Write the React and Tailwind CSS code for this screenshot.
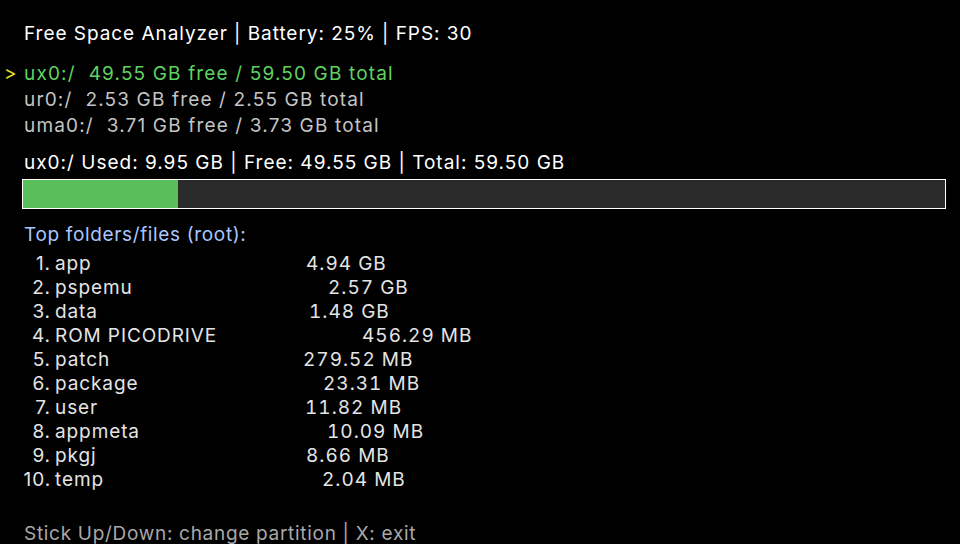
import React from "react";

const rows = [
  { n: "1.", name: "app", size: "4.94 GB", w: "w-[255px]" },
  { n: "2.", name: "pspemu", size: "2.57 GB", w: "w-[277px]" },
  { n: "3.", name: "data", size: "1.48 GB", w: "w-[258px]" },
  { n: "4.", name: "ROM PICODRIVE", size: "456.29 MB", w: "w-[311px]" },
  { n: "5.", name: "patch", size: "279.52 MB", w: "w-[252px]" },
  { n: "6.", name: "package", size: "23.31 MB", w: "w-[272px]" },
  { n: "7.", name: "user", size: "11.82 MB", w: "w-[254px]" },
  { n: "8.", name: "appmeta", size: "10.09 MB", w: "w-[276px]" },
  { n: "9.", name: "pkgj", size: "8.66 MB", w: "w-[255px]" },
  { n: "10.", name: "temp", size: "2.04 MB", w: "w-[271px]" },
];

export default function App() {
  return (
    <div
      className="w-[960px] h-[544px] bg-black overflow-hidden text-[19px] whitespace-nowrap"
      style={{ fontFamily: "Inter, 'Noto Sans', sans-serif" }}
    >
      <div className="flex flex-col pt-[21px]">
        <div className="h-[26px] leading-[26px] pl-[24px] text-white tracking-[0.95px]">
          Free Space Analyzer | Battery: 25% | FPS: 30
        </div>
        <div className="mt-[14px] flex flex-col tracking-[1.15px]">
          <div className="h-[26px] leading-[26px] flex text-[#5fd35f]">
            <span className="w-[24px] pl-[4px] text-[#f0e020]">&gt;</span>
            <span>ux0:/&nbsp;&nbsp;49.55 GB free / 59.50 GB total</span>
          </div>
          <div className="h-[26px] leading-[26px] pl-[24px] text-[#c4c4c4]">
            ur0:/&nbsp;&nbsp;2.53 GB free / 2.55 GB total
          </div>
          <div className="h-[26px] leading-[26px] pl-[24px] text-[#c4c4c4]">
            uma0:/&nbsp;&nbsp;3.71 GB free / 3.73 GB total
          </div>
        </div>
        <div className="mt-[12px] h-[24px] leading-[24px] pl-[24px] text-white tracking-[1px]">
          ux0:/ Used: 9.95 GB | Free: 49.55 GB | Total: 59.50 GB
        </div>
        <div className="mt-[4px] ml-[22px] w-[924px] h-[30px] border border-white bg-[#2a2a2a] flex">
          <div className="w-[155px] h-full bg-[#5abf5a]" />
        </div>
        <div className="mt-[14px] h-[24px] leading-[24px] pl-[24px] text-[#a9c7ff] tracking-[0.65px]">
          Top folders/files (root):
        </div>
        <div className="mt-[5px] flex flex-col text-[#e4e4e4] tracking-[0.9px]">
          {rows.map((r) => (
            <div key={r.n} className="h-[24px] leading-[24px] flex">
              <span className="w-[51px] text-right">{r.n}</span>
              <span className={"pl-[4px] " + r.w}>{r.name}</span>
              <span className="tabular-nums tracking-[1px]">{r.size}</span>
            </div>
          ))}
        </div>
        <div className="mt-[30px] h-[24px] leading-[24px] pl-[24px] text-[#a8a8a8] tracking-[0.7px]">
          Stick Up/Down: change partition | X: exit
        </div>
      </div>
    </div>
  );
}
